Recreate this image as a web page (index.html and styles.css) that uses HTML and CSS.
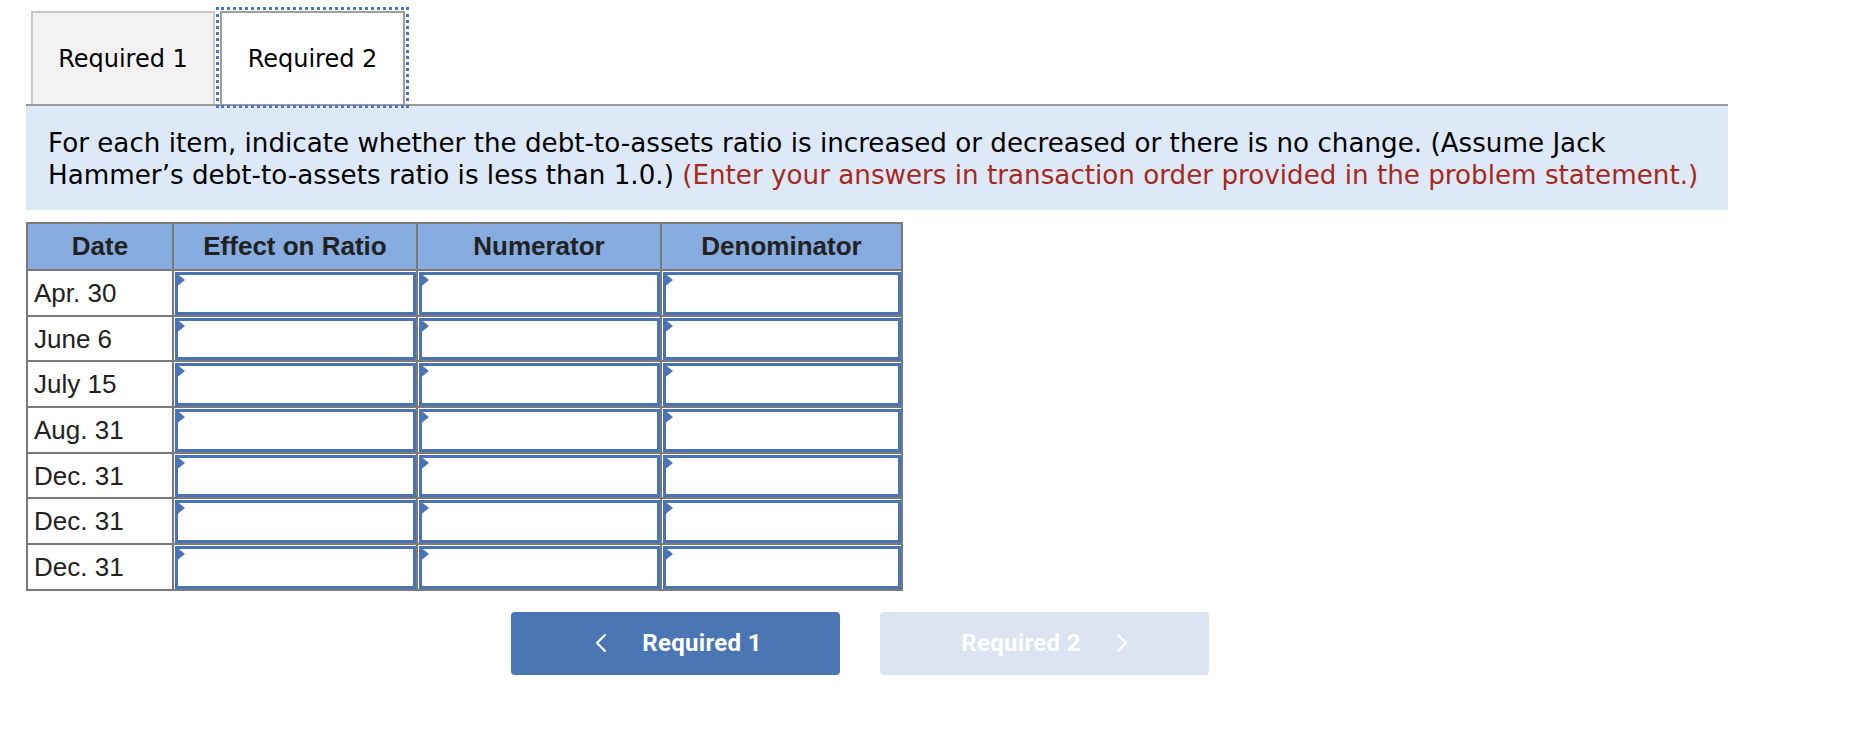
FILE: index.html
```html
<!DOCTYPE html>
<html lang="en">
<head>
<meta charset="utf-8">
<title>Required 2</title>
<link rel="stylesheet" href="styles.css">
</head>
<body>
<div class="page">
  <div class="tabs">
    <div class="tab">Required 1</div>
    <div class="tab active">Required 2</div>
  </div>
  <div class="panel">
    <p>For each item, indicate whether the debt-to-assets ratio is increased or decreased or there is no change. (Assume Jack Hammer’s debt-to-assets ratio is less than 1.0.) <span class="red">(Enter your answers in transaction order provided in the problem statement.)</span></p>
  </div>
  <table class="grid">
    <colgroup>
      <col class="c-date"><col class="c-in"><col class="c-in"><col class="c-last">
    </colgroup>
    <thead>
      <tr><th>Date</th><th>Effect on Ratio</th><th>Numerator</th><th>Denominator</th></tr>
    </thead>
    <tbody>
      <tr><td class="date">Apr. 30</td><td class="cell"><div class="inp"></div></td><td class="cell"><div class="inp"></div></td><td class="cell"><div class="inp"></div></td></tr>
      <tr><td class="date">June 6</td><td class="cell"><div class="inp"></div></td><td class="cell"><div class="inp"></div></td><td class="cell"><div class="inp"></div></td></tr>
      <tr><td class="date">July 15</td><td class="cell"><div class="inp"></div></td><td class="cell"><div class="inp"></div></td><td class="cell"><div class="inp"></div></td></tr>
      <tr><td class="date">Aug. 31</td><td class="cell"><div class="inp"></div></td><td class="cell"><div class="inp"></div></td><td class="cell"><div class="inp"></div></td></tr>
      <tr><td class="date">Dec. 31</td><td class="cell"><div class="inp"></div></td><td class="cell"><div class="inp"></div></td><td class="cell"><div class="inp"></div></td></tr>
      <tr><td class="date">Dec. 31</td><td class="cell"><div class="inp"></div></td><td class="cell"><div class="inp"></div></td><td class="cell"><div class="inp"></div></td></tr>
      <tr><td class="date">Dec. 31</td><td class="cell"><div class="inp"></div></td><td class="cell"><div class="inp"></div></td><td class="cell"><div class="inp"></div></td></tr>
    </tbody>
  </table>
  <div class="nav">
    <button class="btn prev">
      <svg class="chev" width="12" height="20" viewBox="0 0 12 20"><polyline points="10,2 2,10 10,18" fill="none" stroke="#ffffff" stroke-width="2.2" stroke-linecap="round" stroke-linejoin="round"/></svg>
      <span>Required 1</span>
    </button>
    <button class="btn next" disabled>
      <span>Required 2</span>
      <svg class="chev" width="12" height="20" viewBox="0 0 12 20"><polyline points="2,2 10,10 2,18" fill="none" stroke="#ffffff" stroke-width="2.2" stroke-linecap="round" stroke-linejoin="round"/></svg>
    </button>
  </div>
</div>
</body>
</html>
```
FILE: styles.css
```css
html, body {
  margin: 0;
  padding: 0;
  background: #ffffff;
}

.page {
  padding: 11px 0 0 26px;
  width: 1702px;
  font-family: "DejaVu Sans", Verdana, sans-serif;
  color: #000;
}

.tabs {
  display: flex;
  gap: 5px;
  padding-left: 5px;
  border-bottom: 2px solid #9a9a9a;
}

.tab {
  box-sizing: border-box;
  width: 184px;
  height: 93px;
  display: flex;
  align-items: center;
  justify-content: center;
  font-size: 24px;
  background: #f2f2f2;
  border: 2px solid #c9c9c9;
  border-bottom: none;
}

.tab.active {
  width: 185px;
  background: #ffffff;
  border-color: #9d9d9d;
  outline: 3px dotted #4a76c0;
  outline-offset: 1px;
  position: relative;
}

.panel {
  background: #dee9f7;
  padding: 21px 4px 19px 22px;
}

.panel p {
  margin: 0;
  font-size: 26.2px;
  line-height: 32px;
}

.red {
  color: #a6291f;
}

.grid {
  margin-top: 12px;
  border-collapse: collapse;
  table-layout: fixed;
  width: 875px;
  font-family: "Liberation Sans", Arial, sans-serif;
  font-size: 26px;
  color: #222;
}

.c-date { width: 146px; }
.c-in { width: 244px; }
.c-last { width: 241px; }

.grid th,
.grid td {
  border: 2px solid #7a7a7a;
}

.grid th {
  background: #87acdf;
  line-height: 45px;
  padding: 0;
  font-weight: bold;
  text-align: center;
  color: #222;
}

.grid td {
  padding: 0;
}

.grid td.date {
  padding-left: 6px;
  text-align: left;
  line-height: 30px;
}

.grid td.cell {
  padding: 1px 0 0 1px;
}

.inp {
  position: relative;
  box-sizing: border-box;
  height: 42.7px;
  background: #fff;
  border: 3px solid #4a74b6;
}

.inp::before {
  content: "";
  position: absolute;
  left: -3px;
  top: -3px;
  border-left: 10px solid #4a74b6;
  border-top: 8px solid transparent;
  border-bottom: 8px solid transparent;
}

.nav {
  display: flex;
  justify-content: center;
  gap: 40px;
  width: 1668px;
  margin-top: 21px;
}

.btn {
  box-sizing: border-box;
  width: 329px;
  height: 63px;
  border: none;
  border-radius: 4px;
  display: flex;
  align-items: center;
  justify-content: center;
  gap: 35px;
  font-family: Roboto, "Liberation Sans", sans-serif;
  font-weight: 700;
  font-size: 24px;
  letter-spacing: 0.3px;
  color: #ffffff;
  padding: 0;
}

.btn.prev {
  background: #4a76b4;
  padding-left: 6px;
}

.btn.next {
  background: #dbe4f0;
}

.chev {
  display: block;
}
```
